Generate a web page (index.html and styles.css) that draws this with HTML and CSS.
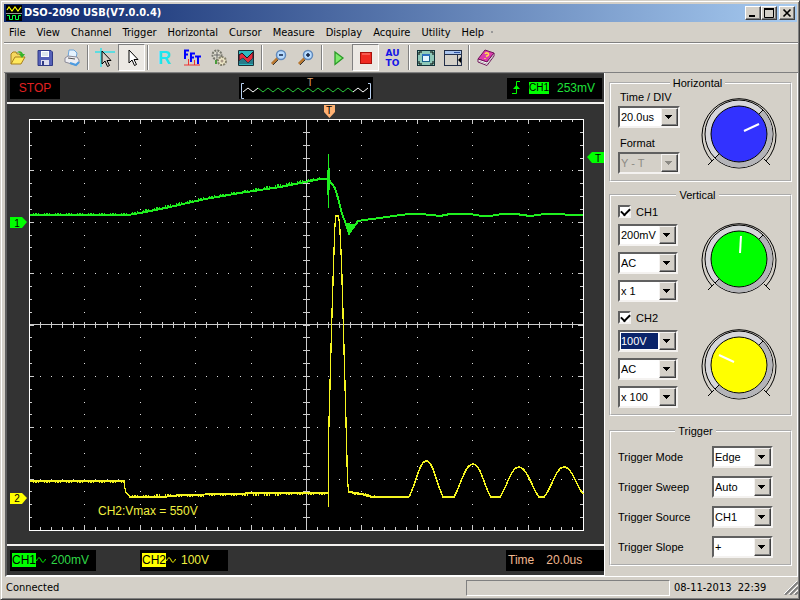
FILE: index.html
```
<!DOCTYPE html>
<html lang="en">
<head>
    <meta charset="utf-8">
    <title>DSO-2090 USB(V7.0.0.4)</title>
    <link rel="stylesheet" href="styles.css">
</head>
<body>
<div class="window">
    <header class="titlebar">
        <svg class="app-icon" width="16" height="16" viewBox="0 0 16 16">
            <rect width="16" height="16" fill="#000"/>
            <path d="M1 5L3 2L6 6L9 2L12 6L15 2" fill="none" stroke="#ff0" stroke-width="1.2"/>
            <path d="M0 8.5H16" stroke="#999"/>
            <path d="M1 10.500H3.500V14.500H6.500V10.500H9.500V14.500H12.500V10.500H15" fill="none" stroke="#0f4"/>
        </svg>
        <h1>DSO-2090 USB(V7.0.0.4)</h1>
        <button class="caption" aria-label="Minimize"><svg width="10" height="10"><path d="M1 8H7" stroke="#000" stroke-width="2"/></svg></button>
        <button class="caption" aria-label="Maximize"><svg width="10" height="10"><path d="M.5 1V9.500H9.500V1M0 1H10" fill="none" stroke="#000"/><path d="M0 1H10" stroke="#000" stroke-width="2"/></svg></button>
        <button class="caption close" aria-label="Close"><svg width="10" height="10"><path d="M1.500 1.500L8.500 8.500M8.500 1.500L1.500 8.500" stroke="#000" stroke-width="1.700"/></svg></button>
    </header>

    <nav class="menu">
        <a href="#">File</a>
        <a href="#">View</a>
        <a href="#">Channel</a>
        <a href="#">Trigger</a>
        <a href="#">Horizontal</a>
        <a href="#">Cursor</a>
        <a href="#">Measure</a>
        <a href="#">Display</a>
        <a href="#">Acquire</a>
        <a href="#">Utility</a>
        <a href="#">Help</a>
        <i class="dot"></i>
    </nav>

    <div class="toolbar">
        <button aria-label="Open"><svg width="18" height="18" viewBox="0 0 18 18">
            <path d="M2 15V5L4 3H7L8 5H13V8" fill="#f5d860" stroke="#a8801c"/>
            <path d="M2 15L6 8H16L12 15Z" fill="#ffe95c" stroke="#a8801c"/>
            <path d="M7 4C10 1 13 2 14 5L16 5L13 9L10 5H12C11 4 9 3 7 4Z" fill="#35b52a"/>
        </svg></button>
        <button aria-label="Save"><svg width="18" height="18" viewBox="0 0 18 18">
            <path d="M2 1.500H15L16.500 3V16.500H2Z" fill="#5661b8" stroke="#303a85"/>
            <rect x="5" y="2" width="8" height="6" fill="#fff"/>
            <path d="M6 4H12M6 6H12" stroke="#bcd"/>
            <rect x="5" y="11" width="8" height="5" fill="#dde"/>
            <rect x="6" y="12" width="2" height="4" fill="#303a85"/>
        </svg></button>
        <button aria-label="Print"><svg width="18" height="18" viewBox="0 0 18 18">
            <path d="M5 8L6 1H11L14 4L13 9Z" fill="#e6f3ff" stroke="#6da4d8"/>
            <path d="M2 9L5 7L14 8L16 11V14L12 16L2 13Z" fill="#eeeef3" stroke="#8b8b98"/>
            <path d="M5 9L12 10" fill="none" stroke="#555"/>
            <path d="M7 14L13 16L16 13" fill="none" stroke="#4c9be0" stroke-width="2"/>
        </svg></button>
        <i class="sep"></i>
        <button aria-label="Cross cursor"><svg width="22" height="22" viewBox="0 0 22 22">
            <path d="M1 5H21M7 1V20" stroke="#35e0e8" stroke-width="1.500"/>
            <path d="M8 4V17L11 14L13.500 19.500L15.500 18.500L13 13.500H17Z" fill="#d4d0c8" stroke="#000"/>
        </svg></button>
        <button class="pressed" aria-label="Pointer"><svg width="22" height="22" viewBox="0 0 22 22">
            <path d="M8 3V16L11 13L13.500 18.500L15.500 17.500L13 12.500H17Z" fill="#fff" stroke="#000"/>
        </svg></button>
        <i class="sep"></i>
        <button class="ref" aria-label="Reference">R</button>
        <button aria-label="FFT"><svg width="20" height="20" viewBox="0 0 20 20">
            <path d="M2 17H18M6.500 11V17M12.500 12V17" stroke="#e33" fill="none"/>
            <path d="M3 11V2.500H7M3 6.500H6M9 14V5.500H13M9 9.500H12M13 8.500H19M16 8.500V16" fill="none" stroke="#00f" stroke-width="2"/>
        </svg></button>
        <button aria-label="Options"><svg width="18" height="18" viewBox="0 0 18 18">
            <circle cx="7" cy="6" r="4.500" fill="#dedccf" stroke="#77776d" stroke-dasharray="2 1" stroke-width="2"/>
            <path d="M7 3V9M4 6H10" stroke="#666"/>
            <circle cx="12" cy="12" r="4" fill="#efe8c8" stroke="#85816d" stroke-dasharray="2 1" stroke-width="2"/>
            <circle cx="12" cy="12" r="1.500" fill="#a98"/>
            <path d="M6 11V15" stroke="#4a9b3c" stroke-width="2"/>
        </svg></button>
        <button aria-label="Waveform"><svg width="16" height="16" viewBox="0 0 16 16">
            <rect width="16" height="16" rx="1" fill="#1a3038"/>
            <rect x="1" y="1" width="14" height="14" fill="#2fb9c0"/>
            <path d="M1 5L4 3L9 8L15 2V8L10 13L5 8L1 11Z" fill="#e12c3c" stroke="#25131c"/>
            <path d="M1 11L5 8L10 13L15 8V14H1Z" fill="#287b8a"/>
        </svg></button>
        <i class="sep"></i>
        <button aria-label="Zoom out"><svg width="18" height="18" viewBox="0 0 18 18">
            <path d="M8 9L2 15" stroke="#b77730" stroke-width="3"/><path d="M3 16L8 11" stroke="#333"/>
            <circle cx="11" cy="6" r="4.500" fill="#b8dcff" stroke="#6189bb" stroke-width="1.500"/><path d="M9 6H13" stroke="#124" stroke-width="1.500"/>
        </svg></button>
        <button aria-label="Zoom in"><svg width="18" height="18" viewBox="0 0 18 18">
            <path d="M8 9L2 15" stroke="#b77730" stroke-width="3"/><path d="M3 16L8 11" stroke="#333"/>
            <circle cx="11" cy="6" r="4.500" fill="#b8dcff" stroke="#6189bb" stroke-width="1.500"/><path d="M9 6H13M11 4V8" stroke="#124" stroke-width="1.500"/>
        </svg></button>
        <i class="sep"></i>
        <button aria-label="Run"><svg width="14" height="16" viewBox="0 0 14 16"><path d="M3 2L11 8L3 14.500Z" fill="#7eea6c" stroke="#2a9a27" stroke-width="1.300"/></svg></button>
        <button class="pressed" aria-label="Stop"><svg width="14" height="14" viewBox="0 0 14 14"><rect x="1.500" y="1.500" width="11" height="11" fill="#f02a22" stroke="#a8120c"/><path d="M3 3H11" stroke="#ff8a80"/></svg></button>
        <button class="auto" aria-label="Auto"><span>AU</span><span>TO</span></button>
        <i class="sep"></i>
        <button aria-label="Full screen"><svg width="18" height="16" viewBox="0 0 18 16">
            <rect x=".5" y=".5" width="17" height="15" fill="#8ec8b8" stroke="#103038"/>
            <path d="M2 5V2H5M13 2H16V5M16 11V14H13M5 14H2V11" fill="none" stroke="#000"/>
            <rect x="5.500" y="4.500" width="7" height="7" fill="#e2f4ff" stroke="#17608a"/>
            <path d="M5 5H13" stroke="#2b70c0" stroke-width="2"/>
        </svg></button>
        <button aria-label="Side panel"><svg width="18" height="16" viewBox="0 0 18 16">
            <rect x=".5" y=".5" width="17" height="15" fill="#d4d0c8" stroke="#222e48"/>
            <path d="M1 2.500H17" stroke="#a9c4ee" stroke-width="3"/><path d="M10 2.500H16" stroke="#2b50a0"/>
            <path d="M1 4.500H17M13.500 5V15" stroke="#222e48"/>
            <path d="M17 7V13L14 10Z" fill="#000"/>
        </svg></button>
        <i class="sep"></i>
        <button aria-label="Help book"><svg width="18" height="18" viewBox="0 0 18 18">
            <path d="M1 10L8 1L17 4L10 13Z" fill="#dc3cae" stroke="#701458"/>
            <path d="M1 10V13L10 16.500L17 7V4L10 13Z" fill="#fff" stroke="#701458"/>
            <path d="M2 12L10 15L16 7" fill="none" stroke="#999" stroke-width=".7"/>
            <path d="M8 5C9 3 13 4 11 6.500L9 7.500M8 9V10" stroke="#ffe04a" fill="none" stroke-width="1.500"/>
        </svg></button>
    </div>

    <main class="workspace">
        <section class="scope">
            <div class="strip">
                <div class="readout stop">STOP</div>
                <svg class="preview" width="134" height="22" viewBox="239 76 134 22">
                    <rect x="239" y="76" width="134" height="22" fill="#000"/>
                    <path d="M244 82.500H241.500V97.500H244M368 82.500H370.500V97.500H368" fill="none" stroke="#b8d0f0"/>
                    <path id="memoryWave" fill="none" stroke="#2bc83a"/>
                    <path id="memoryEnds" fill="none" stroke="#fff"/>
                    <text x="310" y="85" class="tag" fill="#e0a878">T</text>
                </svg>
                <div class="readout level">
                    <svg width="10" height="16" viewBox="0 0 10 16"><path d="M1 13.500H5.500V1.500H9" fill="none" stroke="#0f0"/><path d="M2 9L5.500 5L9 9Z" fill="#0f0"/></svg>
                    <b class="chip ch1">CH1</b>
                    <span>253mV</span>
                </div>
            </div>

            <svg class="screen" viewBox="7 104 597 440">
                <rect x="29" y="119" width="555" height="412" fill="#000"/>
                <g id="grid" shape-rendering="crispEdges"></g>
                <g class="trace" stroke="#1ff01f">
                    <path stroke-width="2" d="M30 215H128L140 213L170 207L205 199L240 193L280 187L300 183L320 179H328"/>
                    <path stroke-width="1" d="M328.500 154V208M327.500 170V195M329.500 168V190"/>
                    <path stroke-width="2" d="M329 180L335 188L338 198L342 214L346 224L349 229L356 224L358 221L364 220L380 218L400 215L410 214H420L432 215L440 216L450 214H470L482 216H490L502 214H516L530 216L545 214H560L570 215H583"/>
                    <path fill="#1ff01f" d="M345 223L350 224L356 225L352 230L349 235L347 229Z"/>
                </g>
                <g class="trace" stroke="#f5f520">
                    <path stroke-width="2" d="M30 481H124.500"/>
                    <path stroke-width="1.300" d="M124.500 481V486L126 493L130 496V497"/>
                    <path stroke-width="2" d="M129 497H163L180 495L230 494L260 493H328"/>
                    <path stroke-width="1.300" d="M328.500 507V440L331.500 330L333.500 265L335 224L336 216H338L339.500 222L341.500 262L343.500 330L346.500 440L347.500 480L348.500 491"/>
                    <path stroke-width="2" d="M348 492L356 493L366 495L372 497H409"/>
                    <path stroke-width="1.500" d="M409 497C416 484 419 462 426 461S437 485 443 497H454C461 485 465 464 473 464S484 487 491 497H500C507 487 511 467 519 467S533 490 539 497H544C552 488 556 467 564 467S576 485 583 494"/>
                </g>
                <path id="noise1" class="trace" stroke="#1ff01f"/>
                <path id="noise2" class="trace" stroke="#f5f520"/>
                <path d="M324 105H335V112L329.500 118L324 112Z" fill="#ffb072"/>
                <text x="329" y="114" class="tag">T</text>
                <path d="M10 217H22L27 222L22 228H10Z" fill="#0f0"/>
                <text x="17" y="227" class="tag">1</text>
                <path d="M10 493H22L27 498L22 504H10Z" fill="#ff0"/>
                <text x="17" y="502" class="tag">2</text>
                <path d="M604 152H592L587 157L592 163H604Z" fill="#0f0"/>
                <text x="598" y="162" class="tag">T</text>
                <text x="98" y="515" class="measure">CH2:Vmax = 550V</text>
            </svg>

            <div class="strip footer">
                <div class="readout channel green"><b class="chip ch1">CH1</b><svg width="10" height="8"><path d="M.5 5C2 1 4 1 5 4S8 7 9.500 3" fill="none" stroke="#0f0"/></svg><span>200mV</span></div>
                <div class="readout channel yellow"><b class="chip ch2">CH2</b><svg width="10" height="8"><path d="M.5 5C2 1 4 1 5 4S8 7 9.500 3" fill="none" stroke="#ff0"/></svg><span>100V</span></div>
                <div class="readout timebase"><span>Time</span><span>20.0us</span></div>
            </div>
        </section>

        <aside class="panel">
            <fieldset>
                <legend>Horizontal</legend>
                <div class="controls">
                    <label for="timeDiv">Time / DIV</label>
                    <span class="combo"><select id="timeDiv"><option>20.0us</option></select></span>
                    <label class="second" for="format">Format</label>
                    <span class="combo disabled"><select id="format" disabled><option>Y - T</option></select></span>
                </div>
                <svg class="knob" width="76" height="76" viewBox="-38 -38 76 76">
                    <use href="#dial"/>
                    <circle r="28" fill="#3232ff" stroke="#000"/>
                    <path d="M5 -3L20 -10" stroke="#fff" stroke-width="2"/>
                </svg>
            </fieldset>

            <fieldset class="vertical">
                <legend>Vertical</legend>
                <div class="channel-row">
                    <div class="controls">
                        <label class="check"><input type="checkbox" checked>CH1</label>
                        <span class="combo"><select aria-label="CH1 volts"><option>200mV</option></select></span>
                        <span class="combo"><select aria-label="CH1 coupling"><option>AC</option></select></span>
                        <span class="combo"><select aria-label="CH1 probe"><option>x 1</option></select></span>
                    </div>
                    <svg class="knob" width="76" height="76" viewBox="-38 -38 76 76">
                        <use href="#dial"/>
                        <circle r="28" fill="#0f0" stroke="#000"/>
                        <path d="M1 -6L2 -23" stroke="#fff" stroke-width="2"/>
                    </svg>
                </div>
                <div class="channel-row">
                    <div class="controls">
                        <label class="check"><input type="checkbox" checked>CH2</label>
                        <span class="combo active"><select aria-label="CH2 volts"><option>100V</option></select></span>
                        <span class="combo"><select aria-label="CH2 coupling"><option>AC</option></select></span>
                        <span class="combo"><select aria-label="CH2 probe"><option>x 100</option></select></span>
                    </div>
                    <svg class="knob" width="76" height="76" viewBox="-38 -38 76 76">
                        <use href="#dial"/>
                        <circle r="28" fill="#ff0" stroke="#000"/>
                        <path d="M-5 -3L-20 -10" stroke="#fff" stroke-width="2"/>
                    </svg>
                </div>
            </fieldset>

            <fieldset class="trigger">
                <legend>Trigger</legend>
                <div class="field"><label for="mode">Trigger Mode</label><span class="combo"><select id="mode"><option>Edge</option></select></span></div>
                <div class="field"><label for="sweep">Trigger Sweep</label><span class="combo"><select id="sweep"><option>Auto</option></select></span></div>
                <div class="field"><label for="source">Trigger Source</label><span class="combo"><select id="source"><option>CH1</option></select></span></div>
                <div class="field"><label for="slope">Trigger Slope</label><span class="combo"><select id="slope"><option>+</option></select></span></div>
            </fieldset>
        </aside>
    </main>

    <footer class="statusbar">
        <span class="state">Connected</span>
        <span class="progress"></span>
        <time>08-11-2013&nbsp; 22:39</time>
        <svg width="14" height="14"><path d="M1 14L14 1M6 14L14 6M11 14L14 11" stroke="#808080" stroke-width="2"/><path d="M0 13L13 0M5 13L14 4M10 13L14 9" stroke="#fff"/></svg>
    </footer>
</div>

<!-- ring shared by the three knobs -->
<svg width="0" height="0" class="defs">
    <defs>
        <g id="dial">
            <path d="M-27 27A37 37 0 1 1 27 27" fill="none" stroke="#000"/>
            <circle r="34" fill="#d6d6da" stroke="#000"/>
            <path d="M22 -22A31 31 0 0 1 -22 22" fill="none" stroke="#b4b4b8" stroke-width="5"/>
            <path d="M-25 25L-31 31M25 25L31 31M20 -20L24 -24M-20 20L-24 24" stroke="#000" fill="none"/>
        </g>
    </defs>
</svg>
<script src="scope.js"></script>
</body>
</html>
```
FILE: styles.css
```
* {
    box-sizing: border-box;
}
body {
    margin: 0;
    background: #d4d0c8;
    color: #000;
    font-family: "Liberation Sans", Arial, sans-serif;
    font-size: 11px;
    line-height: 14px;
}
button,
select {
    font: inherit;
    color: inherit;
}
.window {
    display: flex;
    flex-direction: column;
    min-height: 100vh;
    padding: 3px 1px 1px 3px;
    border: 1px solid;
    border-color: #d4d0c8 #404040 #404040 #d4d0c8;
    box-shadow: inset 1px 1px #fff, inset -1px -1px #808080;
}
.titlebar {
    display: flex;
    align-items: center;
    height: 18px;
    margin-right: 1px;
    padding: 0 2px;
    background: linear-gradient(to right, #0a246a, #a6caf0);
    color: #fff;
}
.titlebar h1 {
    flex: 1;
    margin: 0 0 0 2px;
    font: bold 11px/18px "DejaVu Sans Condensed", Tahoma, sans-serif;
}
.caption {
    display: flex;
    align-items: center;
    justify-content: center;
    width: 16px;
    height: 14px;
    padding: 0;
    border: 1px solid;
    border-color: #fff #404040 #404040 #fff;
    background: #d4d0c8;
    box-shadow: inset -1px -1px #808080;
}
.close {
    margin-left: 2px;
}
.menu {
    display: flex;
    height: 21px;
    border-bottom: 1px solid #808080;
    font: 11px/22px "DejaVu Sans Condensed", Tahoma, sans-serif;
}
.menu a {
    padding: 0 6px 0 5px;
    color: #000;
    text-decoration: none;
}
.dot {
    width: 2px;
    height: 2px;
    margin: 9px 1px;
    background: #999;
}
.toolbar {
    display: flex;
    height: 29px;
    border-top: 1px solid #fff;
}
.toolbar button {
    display: flex;
    align-items: center;
    justify-content: center;
    width: 27px;
    height: 27px;
    padding: 0;
    border: 1px solid transparent;
    background: none;
}
.toolbar .pressed {
    border-color: #808080 #fff #fff #808080;
    background: #ece9e4;
}
.sep {
    width: 6px;
    margin: 1px 0 2px;
    background: linear-gradient(to right, transparent 2px, #808080 2px, #808080 3px, #fff 3px, #fff 4px, transparent 4px);
}
.toolbar .ref {
    color: #1ee6f0;
    font-size: 18px;
    font-weight: bold;
}
.toolbar .auto {
    flex-direction: column;
    color: #1414e6;
    font: bold 9px/10px "DejaVu Sans", Tahoma, sans-serif;
}
.workspace {
    display: flex;
    flex: 1;
    border-top: 1px solid #808080;
}
.scope {
    flex: 1;
    min-width: 0;
    margin-left: 1px;
    border-top: 1px solid #404040;
    border-left: 2px solid #606060;
    border-bottom: 2px solid #fff;
    background: #333;
}
.strip {
    display: flex;
    align-items: center;
    justify-content: space-between;
    height: 30px;
    padding: 0 2px 0 3px;
    border-bottom: 2px solid #f4f2f0;
    font-size: 12px;
}
.footer {
    justify-content: flex-start;
    border-top: 2px solid #f4f2f0;
    border-bottom: 0;
    padding-right: 0;
}
.readout {
    display: flex;
    align-items: center;
    height: 21px;
    background: #000;
}
.stop {
    justify-content: center;
    width: 50px;
    color: #e02020;
}
.preview {
    margin-left: 44px;
}
.level {
    gap: 8px;
    width: 95px;
    padding: 0 4px;
    color: #1fe03a;
}
.chip {
    height: 14px;
    font-weight: normal;
    line-height: 15px;
    color: #000;
}
.level .chip {
    width: 20px;
    height: 12px;
    font-size: 10px;
    line-height: 12px;
    text-align: center;
}
.ch1 {
    background: #0f0;
}
.ch2 {
    background: #ff0;
}
.channel {
    width: 86px;
    padding-left: 2px;
}
.channel span {
    margin-left: 5px;
}
.green {
    color: #30d848;
}
.yellow {
    width: 88px;
    margin-left: 44px;
    color: #f0f040;
}
.timebase {
    gap: 12px;
    width: 98px;
    margin-left: auto;
    padding-left: 2px;
    color: #f0b890;
}
.screen {
    display: block;
    width: 100%;
}
.trace {
    fill: none;
    shape-rendering: crispEdges;
}
.tag {
    font-size: 10px;
    text-anchor: middle;
}
.measure {
    font-size: 12px;
    fill: #f0f040;
}
.panel {
    display: flex;
    flex-direction: column;
    gap: 6px;
    width: 194px;
    padding: 3px 5px 0 4px;
    border-left: 1px solid #fff;
    border-right: 1px solid #fff;
    border-bottom: 1px solid #fff;
}
fieldset {
    display: flex;
    justify-content: space-between;
    min-width: 0;
    margin: 0;
    padding: 0 13px 6px 7px;
    border: 2px groove #fff;
}
legend {
    margin: 0 auto;
    padding: 0 3px;
}
.controls {
    display: flex;
    flex-direction: column;
    width: 62px;
}
.second {
    margin-top: 8px;
}
.controls label:not(.check) {
    margin-bottom: 2px;
    padding-left: 2px;
}
.combo {
    display: flex;
    height: 22px;
    border: 2px solid;
    border-color: #606060 #f4f2f0 #f4f2f0 #606060;
    background: #fff;
}
.combo select {
    flex: 1;
    min-width: 0;
    appearance: none;
    padding: 0 0 0 1px;
    border: 0;
    border-radius: 0;
    background: none;
    opacity: 1;
}
.combo::after {
    content: "";
    width: 15px;
    border: 1px solid;
    border-color: #f4f2f0 #404040 #404040 #f4f2f0;
    background:
        linear-gradient(currentColor, currentColor) 3px 6px / 7px 1px no-repeat,
        linear-gradient(currentColor, currentColor) 4px 7px / 5px 1px no-repeat,
        linear-gradient(currentColor, currentColor) 5px 8px / 3px 1px no-repeat,
        linear-gradient(currentColor, currentColor) 6px 9px / 1px 1px no-repeat,
        #d4d0c8;
    box-shadow: inset -1px -1px #808080;
}
.combo.disabled {
    background: #d4d0c8;
    color: #8c8a84;
}
.combo.active select {
    background: #0a246a;
    color: #fff;
    outline: 1px solid #fff;
    outline-offset: -1px;
}
.knob {
    align-self: center;
    margin-top: 4px;
}
.vertical {
    flex-direction: column;
    gap: 9px;
    padding-top: 3px;
}
.vertical .knob {
    margin-top: 10px;
}
.channel-row {
    display: flex;
    justify-content: space-between;
}
.vertical .controls {
    gap: 6px;
    width: 60px;
}
.check {
    display: flex;
    align-items: center;
    gap: 5px;
    height: 13px;
}
.check input {
    appearance: none;
    width: 13px;
    height: 13px;
    margin: 0;
    border: 2px solid;
    border-color: #606060 #f4f2f0 #f4f2f0 #606060;
    background: #fff;
}
.check input:checked::before {
    content: "";
    display: block;
    width: 7px;
    height: 4px;
    margin: 1px;
    border: solid #000;
    border-width: 0 0 2px 2px;
    transform: rotate(-45deg);
}
.trigger {
    flex-direction: column;
    gap: 8px;
    margin-top: 2px;
    padding: 8px 17px 6px 7px;
}
.field {
    display: flex;
    align-items: center;
    justify-content: space-between;
}
.field .combo {
    width: 61px;
}
.statusbar {
    display: flex;
    align-items: center;
    height: 21px;
    padding-left: 2px;
    font: 11px/20px "DejaVu Sans Condensed", Tahoma, sans-serif;
}
.state {
    flex: 1;
}
.progress {
    width: 204px;
    height: 16px;
    border: 1px solid;
    border-color: #808080 #fff #fff #808080;
}
.statusbar time {
    width: 114px;
    padding-left: 4px;
    white-space: nowrap;
}
.defs {
    position: absolute;
}
```
FILE: scope.js
```
var left = 29, top_ = 119, width = 554, height = 411;
var cols = 10, rows = 8;

function gridX(i) {
    return left + Math.round(i * width / 50);
}
function gridY(i) {
    return top_ + Math.round(i * height / 32);
}

// graticule: dots on each division, ticks on the frame and the centre axes
var dots = '', ticks = '', x, y, i, j;
for (i = 0; i <= 50; i++) {
    x = gridX(i);
    for (j = 1; j < rows; j++) {
        dots += 'M' + x + ' ' + (gridY(j * 4) + 0.5) + 'h1';
    }
    var len = i % 5 === 0 ? 5 : 3;
    ticks += 'M' + (x + 0.5) + ' ' + top_ + 'v' + len;
    ticks += 'M' + (x + 0.5) + ' ' + (top_ + height) + 'v-' + len;
    ticks += 'M' + (x + 0.5) + ' 322v6';
}
for (j = 0; j <= 32; j++) {
    y = gridY(j) + 0.5;
    for (i = 1; i < cols; i++) {
        dots += 'M' + gridX(i * 5) + ' ' + y + 'h1';
    }
    var w = j % 4 === 0 ? 5 : 3;
    ticks += 'M' + left + ' ' + y + 'h' + w;
    ticks += 'M' + (left + width) + ' ' + y + 'h-' + w;
    ticks += 'M303 ' + y + 'h7';
}
document.getElementById('grid').innerHTML =
    '<path d="' + dots + '" stroke="#ddd"/>' +
    '<path d="' + ticks + 'M306.5 119V530M29 324.5H583" stroke="#ccc"/>' +
    '<path d="M29.5 119.5H583.5V530.5H29.5Z" fill="none" stroke="#fff"/>';

// small spikes along the flat parts of each trace
function noise(id, segments) {
    var d = '';
    segments.forEach(function (s) {
        for (var x = s[0]; x < s[2]; x++) {
            var n = (x * 7919 + x * x * 31) % 11;
            if (n > 3) continue;
            var y = Math.round(s[1] + (s[3] - s[1]) * (x - s[0]) / (s[2] - s[0]));
            d += 'M' + (x + 0.5) + ' ' + (y - (n < 3 ? 2 : 1)) + 'v3';
        }
    });
    document.getElementById(id).setAttribute('d', d);
}
noise('noise1', [[30, 215, 128, 215], [128, 215, 205, 199], [205, 199, 320, 179], [346, 226, 354, 226]]);
noise('noise2', [[30, 482, 124, 482], [130, 497, 230, 495], [230, 495, 327, 494], [350, 493, 375, 497]]);

function wave(from, to) {
    var d = '';
    for (var x = from; x <= to; x += 5) {
        d += (d ? 'L' : 'M') + x + ' ' + ((x - 243) % 10 ? 87 : 91);
    }
    return d;
}
document.getElementById('memoryWave').setAttribute('d', wave(258, 353));
document.getElementById('memoryEnds').setAttribute('d', wave(243, 258) + wave(353, 368));
```
